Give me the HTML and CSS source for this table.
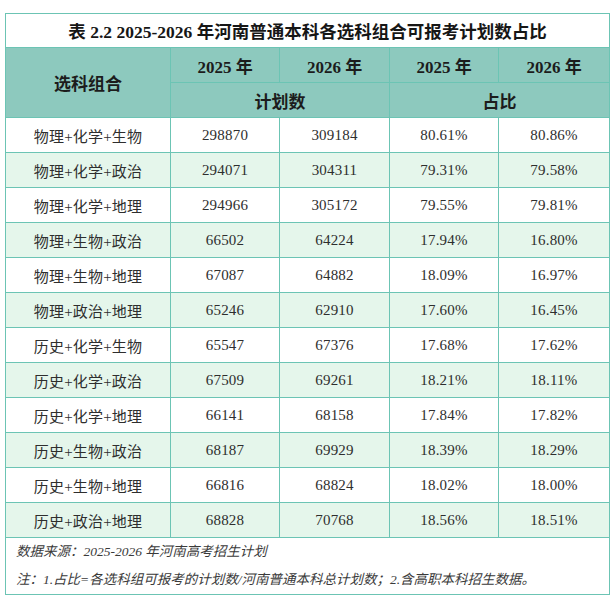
FILE: index.html
```html
<!DOCTYPE html>
<html lang="zh-CN">
<head>
<meta charset="utf-8">
<title>表 2.2</title>
<link rel="stylesheet" href="styles.css">
</head>
<body>
<div class="page">
<table class="plan">
  <colgroup>
    <col class="c1"><col class="c2"><col class="c3"><col class="c4"><col class="c5">
  </colgroup>
  <thead>
    <tr class="title-row"><th colspan="5" class="title">表 2.2 2025-2026 年河南普通本科各选科组合可报考计划数占比</th></tr>
    <tr class="head-row">
      <th rowspan="2" class="head">选科组合</th>
      <th class="head">2025 年</th>
      <th class="head">2026 年</th>
      <th class="head">2025 年</th>
      <th class="head">2026 年</th>
    </tr>
    <tr class="head-row">
      <th colspan="2" class="head">计划数</th>
      <th colspan="2" class="head">占比</th>
    </tr>
  </thead>
  <tbody>
    <tr><td>物理+化学+生物</td><td>298870</td><td>309184</td><td>80.61%</td><td>80.86%</td></tr>
    <tr><td>物理+化学+政治</td><td>294071</td><td>304311</td><td>79.31%</td><td>79.58%</td></tr>
    <tr><td>物理+化学+地理</td><td>294966</td><td>305172</td><td>79.55%</td><td>79.81%</td></tr>
    <tr><td>物理+生物+政治</td><td>66502</td><td>64224</td><td>17.94%</td><td>16.80%</td></tr>
    <tr><td>物理+生物+地理</td><td>67087</td><td>64882</td><td>18.09%</td><td>16.97%</td></tr>
    <tr><td>物理+政治+地理</td><td>65246</td><td>62910</td><td>17.60%</td><td>16.45%</td></tr>
    <tr><td>历史+化学+生物</td><td>65547</td><td>67376</td><td>17.68%</td><td>17.62%</td></tr>
    <tr><td>历史+化学+政治</td><td>67509</td><td>69261</td><td>18.21%</td><td>18.11%</td></tr>
    <tr><td>历史+化学+地理</td><td>66141</td><td>68158</td><td>17.84%</td><td>17.82%</td></tr>
    <tr><td>历史+生物+政治</td><td>68187</td><td>69929</td><td>18.39%</td><td>18.29%</td></tr>
    <tr><td>历史+生物+地理</td><td>66816</td><td>68824</td><td>18.02%</td><td>18.00%</td></tr>
    <tr><td>历史+政治+地理</td><td>68828</td><td>70768</td><td>18.56%</td><td>18.51%</td></tr>
  </tbody>
  <tfoot>
    <tr class="foot-row"><td colspan="5" class="notes">
      <p class="note">数据来源：2025-2026 年河南高考招生计划</p>
      <p class="note">注：1.占比=各选科组可报考的计划数/河南普通本科总计划数；2.含高职本科招生数据。</p>
    </td></tr>
  </tfoot>
</table>
</div>
</body>
</html>
```

FILE: styles.css
```css
html, body {
  margin: 0;
  padding: 0;
  background: #ffffff;
}

.page {
  padding: 13px 5px 0 5px;
}

.plan {
  width: 604px;
  table-layout: fixed;
  border-collapse: collapse;
  font-family: "Liberation Serif", "Noto Sans CJK SC", serif;
  color: #2e2e2e;
}

.c1 { width: 165px; }
.c2 { width: 109px; }
.c3 { width: 110px; }
.c4 { width: 109px; }
.c5 { width: 111px; }

.plan th,
.plan td {
  border: 1px solid #6cc4b4;
  padding: 0;
  text-align: center;
  vertical-align: middle;
}

.title-row { height: 34px; }

.plan .title {
  background: #ffffff;
  font-size: 17.5px;
  font-weight: bold;
  color: #161616;
}

.head-row { height: 35px; }

.plan .head {
  background: #8dc9be;
  font-size: 17px;
  font-weight: bold;
  color: #1c1c1c;
}

.plan tbody tr { height: 35px; }

.plan tbody td {
  font-size: 15px;
  letter-spacing: 0.2px;
  background: #ffffff;
}

.plan tbody tr:nth-child(even) td {
  background: #e5f6eb;
}

.foot-row { height: 57px; }

.plan .notes {
  text-align: left;
  padding: 0 10px;
}

.note {
  margin: 0;
  font-size: 13.5px;
  line-height: 28px;
  font-style: italic;
  color: #3a3a3a;
}
```
